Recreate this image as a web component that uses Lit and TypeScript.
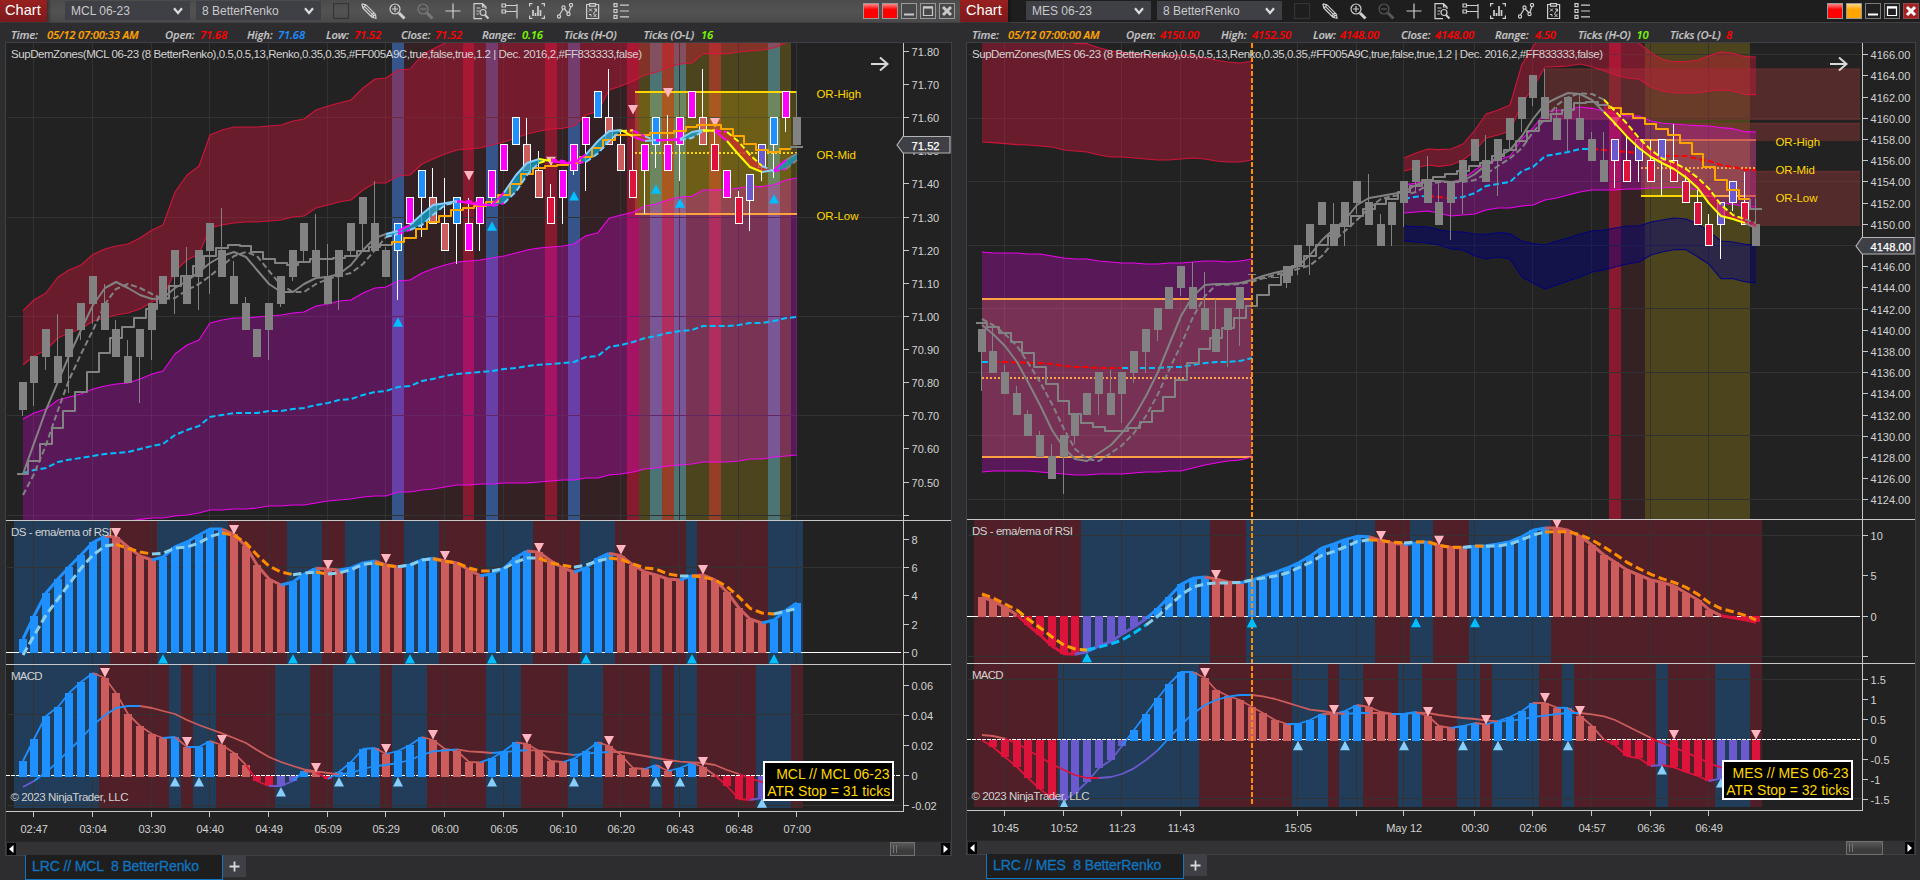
import { LitElement, html, svg, css, nothing } from "lit";
import { customElement, property } from "lit/decorators.js";

const N = 67;
const STEP = 11.739;

const COLORS: Record<string, string> = {
  b: "#1e90ff", r: "#cd5c5c", c: "#dc143c", s: "#6a5acd", m: "#ff00ff", g: "#828282",
  k: "#87ceeb", o: "#ff8c00", y: "#ffff00", l: "#87cefa", d: "#00bfff", R: "#ff0000", a: "#ffa500",
};

const nums = (s: string) => s.trim().split(/\s+/).map(Number);
// "b8 r4" -> eight times b, four times r
const runs = (s: string) =>
  s.trim().split(/\s+/).map((t) => t[0].repeat(Number(t.slice(1) || 1))).join("");

interface Band { from: number; hi: number[]; lo: number[]; fill: string; stroke: string; opacity: number; sw?: number }
interface Series { from: number; ys: number[]; colors: string; dash?: string; width: number }
interface Range { x1: number; x2: number; hi: number; mid: number; lo: number }
interface Tri { i: number; y: number; up?: boolean; color?: string }
interface Study { bars: number[]; colors: string; zero: number; sig: number[]; sigColors: string; tris: Tri[]; lineW: number; dash?: string }
interface ChartData {
  symbol: string; active: boolean; x0: number; left: number; width: number; height: number; axisX: number; stripeX: number;
  info: [number, string, string][]; title: string; lights: [string, string];
  gridX: number[]; times: string[]; gridY: number[]; priceTicks: [number, string][];
  stripes: [number, number, string][]; ranges: Range[]; bands: Band[]; zones: [number, number, number][];
  series: Series[]; stair: number[]; stairColors: string; tops: number[]; candles: string; candleColors: string;
  hma: number[]; sig: number[]; hmaColors: string; cloudFrom: number; cloudUp: string; cloudDown: string;
  tris: Tri[]; orLabels: [number, string][]; mark: [number, string]; sep: [number, number, number];
  ds: Study; macd: Study; studyGrid: number[]; dsTicks: [number, string][]; macdTicks: [number, string][];
  labelBox: [number, number, string, string]; session?: number; thumb: [number, number];
}

const PY = (v: number) => 60 + v / 3;
const SY = (v: number) => 515 + v / 3;

const down = (list: [number, number][]): Tri[] => list.map(([i, y]) => ({ i, y, color: "#ffb6c1" }));
const up = (list: [number, number][], color = "#00bfff"): Tri[] => list.map(([i, y]) => ({ i, y, up: true, color }));

const MCL: ChartData = {
  symbol: "MCL", active: false, x0: 23.02, left: 6, width: 945, height: 798, axisX: 903, stripeX: 14,
  info: [
    [11, "Time:", "w"], [47, "05/12 07:00:33 AM", "a"], [165, "Open:", "w"], [200, "71.68", "R"], [247, "High:", "w"],
    [278, "71.68", "b"], [326, "Low:", "w"], [354, "71.52", "R"], [401, "Close:", "w"], [435, "71.52", "R"],
    [482, "Range:", "w"], [522, "0.16", "n"], [564, "Ticks (H-O)", "w"], [643.5, "Ticks (O-L)", "w"], [701, "16", "n"],
  ],
  title: "SupDemZones(MCL 06-23 (8 BetterRenko),0.5,0.5,13,Renko,0.35,0.35,#FF005A9C,true,false,true,1.2 | Dec. 2016,2,#FF833333,false)",
  lights: ["#ff0000", "#ff0000"],
  gridX: [1, 6, 11, 16, 21, 26, 31, 36, 41, 46, 51, 56, 61, 66],
  times: "02:47 03:04 03:30 04:40 04:49 05:09 05:29 06:00 06:05 06:10 06:20 06:43 06:48 07:00".split(" "),
  gridY: [117, 217, 316, 415, 515],
  priceTicks: [[-25, "71.80"], [74, "71.70"], [173, "71.60"], [272, "71.50"], [371, "71.40"], [472, "71.30"], [571, "71.20"],
    [671, "71.10"], [769, "71.00"], [869, "70.90"], [968, "70.80"], [1066, "70.70"], [1166, "70.60"], [1267, "70.50"], [1366, ""]],
  stripes: [[32, 32, "#34548a"], [33, 52, "#342124"], [38, 38, "#881a30"], [40, 40, "#34548a"], [45, 45, "#881a30"],
    [47, 47, "#34548a"], [52, 52, "#881a30"], [53, 65, "#4c441c"], [54, 54, "#4c7474"], [55, 55, "#963e28"],
    [56, 56, "#4c7474"], [59, 59, "#963e28"], [64, 64, "#4c7474"]],
  ranges: [{ x1: 635, x2: 797, hi: 96, mid: 279, lo: 462 }],
  bands: [
    {
      from: 0, fill: "#dc143c", stroke: "#dc143c", opacity: 0.38,
      hi: nums("752 720 699 651 630 615 583 567 558 552 534 510 495 396 345 318 225 210 201 201 201 198 195 183 177 150 138 129 120 84 57 54 30 27 -15 -33 -51" + " -90".repeat(30)),
      lo: nums("915 888 870 834 819 807 783 774 765 759 747 726 714 633 600 582 504 495 489 486 486 483 480 471 468 444 435 426 420 390 369 369 348 345 312 297 282 270 267 264 255 246 234 222 214 207 205 198 165 154 90 78 63 45 37 22 12 9 -19 -19 -19 -24 -27 -30 -37 -51 -90"),
    },
    {
      from: 0, fill: "#ff00ff", stroke: "#ff00ff", opacity: 0.25,
      hi: nums("1077 1059 1047 1020 1011 1002 987 978 972 969 957 942 933 882 855 840 789 780 774 774 771 768 765 759 756 738 732 723 720 699 684 681 663 660 639 626 615 606 603 600 594 588 579 570 564 561 558 552 527 518 475 465 457 438 432 420 411 409 390 390 389 384 380 380 374 360 354"),
      lo: nums("1420 1415 1412 1406 1402 1398 1394 1390 1387 1384 1378 1374 1374 1368 1365 1359 1350 1350 1347 1347 1344 1338 1338 1335 1335 1329 1323 1320 1317 1311 1308 1308 1296 1296 1290 1287 1281 1275 1275 1272 1272 1269 1269 1269 1266 1263 1260 1260 1254 1254 1245 1242 1236 1227 1224 1218 1215 1212 1206 1206 1206 1203 1197 1197 1191 1188 1185"),
    },
  ],
  zones: [],
  series: [{
    from: 0, colors: runs("d67"), dash: "6 3", width: 2,
    ys: nums("1239 1230 1224 1206 1199 1194 1188 1182 1179 1176 1167 1158 1152 1125 1110 1098 1071 1065 1059 1059 1059 1053 1053 1047 1044 1035 1029 1020 1017 1005 996 993 981 978 963 957 948 942 939 936 933 927 924 918 914 912 909 906 891 888 861 855 846 834 828 819 813 810 798 798 798 795 789 789 783 774 771"),
  }],
  stair: nums("1242 1203 1152 1104 1053 996 936 879 834 801 774 747 714 678 648 618 588 564 555 558 576 597 609 615 606 597 597 594 588 573 561 555 546 534 507 486 468 450 444 438 426 405 372 342 324 318 315 309 291 264 240 225 225 225 219 219 213 201 195 195 207 228 252 270 276 267 261"),
  stairColors: runs("g32 a34 g1"),
  tops: [966, 888, 807, 729, 648, 570, 489, 411, 330, 252, 171, 93],
  candles: "0b1068 1b1038 2b930 1t762 2b999 3b840 4b792 3t672 2t780 1t840 2b1029 3b900 4 5b762 4t561 5b750 6b702 5t444 4t603 3t711 2 3b900 4b741 5b663 6b603 5t462 4t552 5b750 6b588 7b573 6t363 5t561 6b720 7 8b531 7t324 6t354 7b612 6t414 7b573 8b431 9 10 9t174 8t273 7t372 8b492 9b345 10b393 11 10t27 9t213 8t216 9b462 10b324 9t165 10b363 11 10t27 9t213 8 7t393 342-423b513 252-323b363 10b354 11b216 10t93",
  candleColors: runs("g32 b m b r r b m m m m b r r c m m m b r r c m b m m m r c m c s s b m g"),
  hma: nums("1242 1150 1050 965 888 810 735 684 666 684 705 717 714 684 663 636 609 588 576 591 630 672 696 696 672 654 651 642 615 570 534 522 513 495 462 435 430 423 429 435 434 398 345 309 297 303 309 309 283 243 214 210 230 243 240 240 237 216 210 213 243 285 321 336 330 300 280"),
  sig: nums("1305 1242 1155 1050 960 882 810 732 687 672 684 702 717 714 690 672 648 618 588 576 588 633 675 696 696 672 657 648 639 612 570 531 522 510 495 465 435 426 423 430 438 430 395 345 309 298 303 309 306 280 243 213 211 229 242 240 240 234 213 211 216 246 285 318 334 327 300"),
  hmaColors: runs("g32 l m l4 m4 l3 y m3 l3 y m l m2 l2 y m y3 l m g"),
  cloudFrom: 32, cloudUp: "rgba(20,160,200,.78)", cloudDown: "rgba(200,52,44,.8)",
  tris: [...down([[38, 333], [45, 290], [52, 135], [55, 84], [59, 174]]), ...up([[32, 772], [40, 484], [47, 393], [54, 373], [56, 415], [64, 402]])],
  orLabels: [[100, "OR-High"], [283, "OR-Mid"], [466, "OR-Low"]],
  mark: [253.5, "71.52"],
  sep: [520, 664, 811],
  ds: {
    zero: 412, lineW: 3, dash: "8.5 4",
    bars: nums("372 303 234 192 156 120 82 64 66 96 123 135 126 96 81 60 42 42 58 94 150 192 210 201 177 160 162 165 159 144 138 150 156 150 135 130 138 144 165 182 177 159 127 108 112 138 159 171 159 130 115 122 150 171 180 192 195 182 180 195 231 279 312 324 315 286 264"),
    colors: runs("b8 r4 b6 r5 b3 r2 b3 r2 b3 r4 b4 r4 b3 r6 b1 r6 b3"),
    sig: nums("420 362 300 252 207 160 120 93 88 100 111 117 115 99 96 84 65 54 60 84 120 153 171 179 174 171 177 174 164 148 144 151 155 150 135 131 139 144 159 168 168 160 141 129 129 144 151 157 150 138 129 133 147 159 162 177 183 183 186 195 215 246 280 294 297 288 280"),
    sigColors: runs("k9 o3 k6 o6 k2 o1 k4 o2 k3 o5 k4 o3 k3 o6 k1 o7 k2"),
    tris: [...down([[8, 39], [18, 30], [26, 135], [31, 117], [36, 108], [44, 84], [51, 90], [58, 150]]), ...up([[12, 417], [23, 417], [28, 417], [33, 417], [40, 417], [48, 417], [57, 417], [64, 417]])],
  },
  macd: {
    zero: 782, lineW: 1.8,
    bars: nums("738 672 603 576 534 501 474 489 534 597 633 657 669 666 696 696 678 690 714 750 798 813 813 798 768 772 792 771 741 702 699 717 708 690 666 675 702 708 741 742 730 708 682 687 708 738 741 731 708 682 693 720 759 762 750 768 759 744 756 781 813 852 855 849 835 820 800"),
    colors: runs("b7 r6 b1 r1 b2 r3 c2 s2 b1 r1 c1 b4 r1 b3 r5 b3 r4 b3 r4 b1 r1 b2 r2 c3 s3 r1"),
    sig: nums("816 798 772 740 705 672 630 601 579 573 573 579 588 597 615 630 642 655 669 684 705 726 741 753 763 769 774 778 774 762 753 750 744 735 720 709 706 703 709 711 714 711 708 705 707 711 716 720 716 713 711 711 717 723 729 735 740 742 744 750 765 777 790 801 805 805 805"),
    sigColors: runs("s2 b9 r17 b10 r3 b3 r4 b3 r11 c5"),
    tris: [...down([[7, 459], [14, 666], [17, 660], [25, 744], [31, 687], [35, 645], [43, 657], [50, 663], [55, 738], [58, 726]]),
      ...up([[13, 786], [15, 786], [22, 816], [27, 786], [32, 786], [40, 786], [47, 786], [54, 786], [56, 786], [63, 850]], "#87cefa")],
  },
  studyGrid: [567, 714, 805],
  dsTicks: [[72, "8"], [157, "6"], [242, "4"], [328, "2"], [412, "0"]],
  macdTicks: [[510, "0.06"], [600, "0.04"], [690, "0.02"], [781, "0"], [872, "-0.02"]],
  labelBox: [763, 761, "MCL // MCL 06-23", "ATR Stop = 31 ticks"],
  thumb: [889, 25],
};

const MES: ChartData = {
  symbol: "MES", active: true, x0: 22.025, left: 7, width: 948, height: 797, axisX: 902, stripeX: 14,
  info: [
    [12, "Time:", "w"], [48, "05/12 07:00:00 AM", "a"], [166, "Open:", "w"], [200, "4150.00", "R"], [261, "High:", "w"],
    [292, "4152.50", "R"], [353, "Low:", "w"], [380, "4148.00", "R"], [441, "Close:", "w"], [475, "4148.00", "R"],
    [535, "Range:", "w"], [575, "4.50", "R"], [618, "Ticks (H-O)", "w"], [676.5, "10", "n"], [710, "Ticks (O-L)", "w"], [766, "8", "R"],
  ],
  title: "SupDemZones(MES 06-23 (8 BetterRenko),0.5,0.5,13,Renko,0.35,0.35,#FF005A9C,true,false,true,1.2 | Dec. 2016,2,#FF833333,false)",
  lights: ["#ff0000", "#ffa500"],
  gridX: [2, 7, 12, 17, 27, 32, 36, 42, 47, 52, 57, 62],
  times: ["10:45", "10:52", "11:23", "11:43", "15:05", "", "May 12", "00:30", "02:06", "04:57", "06:36", "06:49"],
  gridY: [54, 118, 181, 245, 308, 372, 435, 499],
  // the 4148 row carries the last-price marker instead of a label
  priceTicks: Array.from({ length: 22 }, (_, i) => [-15.7 + i * 63.6, i === 9 ? "" : `${4166 - 2 * i}.00`] as [number, string]),
  stripes: [[54, 54, "#881a30"], [55, 56, "#342124"], [57, 65, "#4c441c"]],
  ranges: [{ x1: 22, x2: 292, hi: 717, mid: 954, lo: 1191 }, { x1: 681, x2: 796, hi: 240, mid: 324, lo: 408 }],
  bands: [
    {
      from: 0, fill: "#dc143c", stroke: "#dc143c", opacity: 0.38,
      hi: nums("-60 -60 -60 -60 -60 -60 -60 -60 -50 -49 -37 -27 -23 -19 -16 -13 -13 -14 -14 -6 0 6 9 3"),
      lo: nums("246 248 251 254 255 258 261 270 273 276 285 291 291 294 297 300 300 297 294 297 303 306 306 300"),
    },
    {
      from: 0, fill: "#ff00ff", stroke: "#ff00ff", opacity: 0.25,
      hi: nums("576 579 579 579 582 582 588 594 597 597 603 606 609 609 612 612 609 609 606 603 603 606 603 597"),
      lo: nums("1236 1233 1233 1233 1233 1236 1239 1242 1245 1245 1242 1242 1242 1239 1236 1236 1233 1233 1224 1215 1209 1203 1200 1191"),
    },
    {
      from: 36, fill: "#dc143c", stroke: "#dc143c", opacity: 0.38,
      hi: nums("294 279 267 269 267 252 210 162 150 135 12 -40 -90 -90 -90 -90 -90 -90 -90 -90 -50 -22 -2 5 5 0 -13 -25 -20 -10 -9"),
      lo: nums("333 324 315 319 315 300 273 234 225 213 130 84 21 20 18 12 20 32 45 54 57 81 93 99 99 99 93 90 93 103 104"),
    },
    {
      from: 36, fill: "#ff00ff", stroke: "#ff00ff", opacity: 0.25,
      hi: nums("374 370 361 363 366 357 330 309 300 288 237 204 156 150 150 141 145 153 162 168 168 183 189 192 195 197 198 203 206 215 216"),
      lo: nums("459 456 453 460 468 465 462 450 444 444 438 435 420 414 405 396 390 390 390 387 387 384 384 381 384 390 405 429 433 440 441"),
    },
    {
      from: 36, fill: "#000080", stroke: "#000080", opacity: 0.42,
      hi: nums("498 500 501 509 515 516 522 523 518 521 543 551 555 543 534 522 513 510 504 498 498 486 480 474 477 492 515 543 546 553 555"),
      lo: nums("542 546 549 555 567 570 588 597 591 597 651 669 687 675 663 651 636 630 621 612 606 585 576 569 569 591 613 656 656 665 669"),
    },
  ],
  zones: [[584.5, 27, 180], [713, 190, 243], [785, 334, 498]],
  series: [
    {
      from: 0, colors: runs("d2 R11 d11"), dash: "6 3", width: 2,
      ys: nums("906 906 906 907 908 909 912 918 921 921 924 924 924 924 924 924 921 921 915 909 906 906 903 894"),
    },
    {
      from: 36, colors: runs("d3 R2 d12 R14"), dash: "6 3", width: 2,
      ys: nums("417 410 408 411 415 411 399 378 372 366 333 321 288 282 276 267 267 270 273 276 279 285 287 288 288 297 303 315 321 329 330"),
    },
  ],
  stair: nums("789 801 819 846 879 921 972 1023 1062 1089 1101 1113 1113 1104 1086 1053 1011 960 909 867 834 804 774 738 705 675 645 618 588 555 528 498 468 447 432 417 396 378 360 351 342 333 318 309 288 270 243 213 183 162 150 129 126 135 144 162 174 192 207 225 249 282 321 360 390 417 447"),
  stairColors: runs("g54 a12 g1"),
  tops: [46, 111, 174, 237, 300, 363, 427, 492, 555, 618, 681, 744, 807, 873, 936, 999, 1062, 1125, 1188],
  candles: "12b993 13t804 14t915 15t978 16t1050 17t1113 18t1152 17b1302 16b1152 15 14b1065 15t930 14b1089 13b969 12b939 11b843 10 9b708 10t606 11t636 12t717 11b921 10b858 642-645 655-658 651-654 618-669b684 8b645 7b645 6 7t429 6b558 5b462 6t342 7t462 6b558 5b501 4b396 357-429t288 6t363 5b540 4b462 3 4t225 3b408 2b267 1b216 0b138 1t27 2t141 1b273 2t105 3t216 4t216 3b384 4t228 3b366 4t240 3b408 4t192 5t342 6t390 7t462 6b597 5b453 6t336 7t414",
  candleColors: runs("g54 s c s c s c c c c s s c g"),
  hma: nums("795 822 858 906 966 1035 1110 1164 1197 1203 1179 1155 1119 1071 1008 936 855 768 708 675 672 672 669 660 648 638 630 618 585 540 507 480 435 414 408 402 396 375 363 363 366 363 342 315 291 270 228 177 132 114 99 102 120 156 190 230 264 291 309 327 352 385 430 468 477 489 505"),
  sig: nums("777 795 822 858 908 966 1032 1107 1167 1197 1203 1179 1156 1119 1068 1002 930 855 771 708 675 674 672 665 655 645 635 627 616 588 543 513 480 444 417 408 405 396 375 366 366 366 360 342 318 295 264 216 177 135 112 100 102 119 153 191 234 270 295 308 327 354 386 435 465 478 489"),
  hmaColors: runs("g54 y12 g1"),
  cloudFrom: 54, cloudUp: "rgba(20,160,200,.78)", cloudDown: "rgba(215,20,80,.72)",
  tris: down([[54, 171]]),
  orLabels: [[244, "OR-High"], [328, "OR-Mid"], [412, "OR-Low"]],
  mark: [556.5, "4148.00"],
  sep: [519, 663, 810],
  ds: {
    zero: 304, lineW: 3, dash: "8.5 4",
    bars: nums("246 258 277 300 330 360 393 416 418 410 393 380 357 336 311 280 246 208 190 186 192 201 204 195 184 172 159 144 124 99 87 74 64 65 76 84 89 84 81 92 97 99 94 92 87 80 65 46 39 39 46 64 90 120 141 165 180 195 202 213 234 255 284 302 308 314 322"),
    colors: runs("r4 c5 s6 b5 r3 b11 r3 b2 r3 b7 r15 c3"),
    sig: nums("237 249 267 285 312 338 366 390 402 405 396 387 375 354 330 303 273 240 216 207 204 204 202 195 189 183 174 159 143 121 109 96 80 74 77 81 84 81 80 91 97 97 93 94 93 87 74 60 51 50 50 59 75 96 117 142 161 178 191 202 217 238 263 281 290 301 315"),
    sigColors: runs("o4 a6 d5 k19 o3 k1 o4 k1 o1 k5 o18"),
    tris: [...down([[20, 165], [34, 48], [39, 62], [49, 11]]), ...up([[9, 413], [23, 308], [37, 308], [42, 308]])],
  },
  macd: {
    zero: 674, lineW: 1.8,
    bars: nums("676 696 726 756 789 822 850 855 834 801 759 735 693 645 597 549 507 471 471 489 525 543 555 576 594 615 627 627 615 597 597 588 570 576 591 597 597 591 603 633 639 633 624 628 618 606 588 564 564 578 579 602 633 674 690 723 730 753 750 757 771 783 798 790 775 760 740"),
    colors: runs("c7 s6 b6 r8 b3 r1 b2 r3 b2 r3 b2 r1 b4 r2 b1 r3 c4 s1 c4 s3 c1"),
    sig: nums("660 663 671 685 705 726 747 765 780 789 789 786 777 760 735 705 669 630 596 570 555 545 540 540 544 552 563 573 584 588 594 597 594 594 594 597 597 593 594 600 605 609 612 616 619 617 613 606 602 597 594 594 598 604 615 633 651 669 684 697 712 728 745 757 765 770 775"),
    sigColors: runs("r3 c8 s5 b8 r8 b2 r2 b2 r7 b7 r6 c9"),
    tris: [...down([[19, 459], [30, 570], [33, 546], [38, 576], [43, 600], [48, 534], [51, 573], [59, 645], [66, 645]]),
      ...up([[7, 853], [27, 677], [31, 677], [36, 677], [41, 677], [44, 677], [50, 677], [58, 750], [63, 789]], "#87cefa")],
  },
  studyGrid: [535, 656, 679, 798],
  dsTicks: [[62, "10"], [182, "5"], [304, "0"], [424, ""]],
  macdTicks: [[494, "1.5"], [554, "1"], [614, "0.5"], [674, "0"], [734, "-0.5"], [792, "-1"], [852, "-1.5"]],
  labelBox: [762, 760, "MES // MES 06-23", "ATR Stop = 32 ticks"],
  session: 23,
  thumb: [885, 37],
};

@customElement("trend-chart")
class TrendChart extends LitElement {
  @property({ attribute: false }) data!: ChartData;

  static styles = css`
    :host { display: block; }
    svg { display: block; font-family: "Liberation Sans", Arial, sans-serif; }
    .t { font-size: 11px; fill: #d2d2d2; }
    .cap { font-size: 11.5px; fill: #d2d2d2; }
    .or { font-size: 11.5px; fill: #ffd700; }
    .box { font-size: 14px; fill: #ffd700; }
    .mark { font-size: 11.2px; fill: #fff; stroke: #fff; stroke-width: 0.25px; }
    .crisp { shape-rendering: crispEdges; }
    .line { fill: none; stroke-linejoin: round; }
  `;

  x(i: number) { return Math.floor(this.data.x0 + STEP * i); }

  pts(ys: number[], from: number, Y: (v: number) => number) {
    return ys.map((v, k) => `${this.x(from + k)},${Y(v).toFixed(2)}`);
  }

  // one polyline for each run of equal colour
  multi(ys: number[], from: number, colors: string, Y: (v: number) => number, width: number, dash?: string) {
    const p = this.pts(ys, from, Y);
    const out = [];
    let s = 1;
    for (let k = 2; k <= ys.length; k++) {
      if (k === ys.length || colors[k] !== colors[s]) {
        out.push(svg`<polyline class="line" points=${p.slice(s - 1, k).join(" ")} stroke=${COLORS[colors[s]]}
          stroke-width=${width} stroke-dasharray=${dash ?? nothing}/>`);
        s = k;
      }
    }
    return out;
  }

  tri(t: Tri, Y: (v: number) => number) {
    const x = this.x(t.i), y = Y(t.y);
    return t.up
      ? svg`<polygon points="${x},${y} ${x + 5},${y + 9.5} ${x - 5},${y + 9.5}" fill=${t.color}/>`
      : svg`<polygon points="${x - 5},${y} ${x + 5},${y} ${x},${y + 9.5}" fill=${t.color}/>`;
  }

  band(b: Band) {
    const hi = this.pts(b.hi, b.from, PY), lo = this.pts(b.lo, b.from, PY);
    return svg`<polygon points="${hi.join(" ")} ${[...lo].reverse().join(" ")}" fill=${b.fill} fill-opacity=${b.opacity}/>
      <polyline class="line" points=${hi.join(" ")} stroke=${b.stroke} stroke-width="1.1" stroke-opacity=".9"/>
      <polyline class="line" points=${lo.join(" ")} stroke=${b.stroke} stroke-width="1.1" stroke-opacity=".9"/>`;
  }

  candle(spec: string, i: number) {
    const d = this.data, c = d.candleColors[i];
    const m = spec.match(/^(\d+)(?:-(\d+))?(?:t(\d+))?(?:b(\d+))?$/)!;
    const custom = m[2] !== undefined;
    const top = custom ? +m[1] : d.tops[+m[1]];
    const next = d.tops.filter((t) => t > top).sort((a, b) => a - b)[0];
    const bottom = custom ? +m[2] : (next ?? top + (d.symbol === "MCL" ? 81 : 66)) + 3;
    const X = this.x(i), y1 = Math.round(PY(top)), y2 = Math.round(PY(bottom));
    const w1 = m[3] ? Math.round(PY(+m[3])) : y1, w2 = m[4] ? Math.round(PY(+m[4])) : y2;
    const gray = c === "g";
    return svg`<rect x=${X - 1} y=${w1} width="1" height=${w2 - w1} fill=${gray ? COLORS.g : "#fff"}/>
      <rect x=${X - 4} y=${y1} width="8" height=${y2 - y1} fill=${gray ? COLORS.g : "#fff"}/>
      ${gray ? nothing : svg`<rect x=${X - 3} y=${y1 + 1} width="6" height=${y2 - y1 - 2} fill=${COLORS[c]}/>`}`;
  }

  stairs() {
    const d = this.data, out = [];
    for (let s = 0; s < N;) {
      let e = s;
      while (e + 1 < N && d.stairColors[e + 1] === d.stairColors[s]) e++;
      let path = s ? `M${this.x(s) - 6} ${PY(d.stair[s - 1])}V${PY(d.stair[s])}` : `M${this.x(0) - 6} ${PY(d.stair[0])}`;
      for (let i = s; i <= e; i++) path += `V${PY(d.stair[i]).toFixed(1)}H${i < N - 1 ? this.x(i + 1) - 6 : this.x(i) + 6}`;
      out.push(svg`<path class="line" d=${path} stroke=${COLORS[d.stairColors[s]]} stroke-width="2"/>`);
      s = e + 1;
    }
    return out;
  }

  cloud() {
    const d = this.data, out = [];
    for (let i = d.cloudFrom; i < N; i++) {
      const a = this.x(i - 1), b = this.x(i);
      const up = d.hma[i] + d.hma[i - 1] < d.sig[i] + d.sig[i - 1];
      out.push(svg`<polygon points="${a},${PY(d.hma[i - 1])} ${b},${PY(d.hma[i])} ${b},${PY(d.sig[i])} ${a},${PY(d.sig[i - 1])}"
        fill=${up ? d.cloudUp : d.cloudDown}/>`);
    }
    return out;
  }

  studyBack(s: Study, y1: number, y2: number) {
    const rise = (i: number) => "bs".includes(s.colors[i]);
    const out = [];
    let a = 0;
    for (let i = 1; i <= N; i++) {
      if (i === N || rise(i) !== rise(a)) {
        const x1 = a ? this.x(a) - 6 : this.data.stripeX;
        const x2 = i === N ? this.x(N - 1) + 6 : this.x(i) - 6;
        out.push(svg`<rect x=${x1} y=${y1} width=${x2 - x1} height=${y2 - y1} fill=${rise(a) ? "#223d5a" : "#501f27"}/>`);
        a = i;
      }
    }
    return out;
  }

  study(s: Study) {
    const z = Math.round(SY(s.zero));
    return svg`<g class="crisp">${s.bars.map((v, i) => {
      const y = Math.round(SY(v)), t = Math.min(y, z), h = Math.abs(y - z) + (y < z ? 1 : 0);
      return svg`<rect x=${this.x(i) - 4} y=${t} width="8" height=${h} fill=${COLORS[s.colors[i]]}/>`;
    })}</g>
    ${this.multi(s.bars, 0, s.colors, SY, s.lineW)}
    ${this.multi(s.sig, 0, s.sigColors, SY, s.lineW, s.dash)}
    ${s.tris.map((t) => this.tri(t, SY))}`;
  }

  ticks(list: [number, string][], Y: (v: number) => number) {
    const ax = this.data.axisX;
    return list.map(([v, label]) => {
      const y = Math.floor(Y(v));
      return svg`<rect class="crisp" x=${ax} y=${y} width="6" height="1" fill="#c8c8c8"/>
        <text class="t" x=${ax + 8.6} y=${y + 4.6}>${label}</text>`;
    });
  }

  render() {
    const d = this.data, [s1, s2, s3] = d.sep, ax = d.axisX, R = d.left + d.width;
    const [bx, by, l1, l2] = d.labelBox;
    const my = PY(d.mark[0]);
    return html`<svg width=${d.width} height=${d.height} viewBox="${d.left} 43 ${d.width} ${d.height}">
      <defs>
        <clipPath id="price"><rect x=${d.left} y="43" width=${ax - d.left} height=${s1 - 43}/></clipPath>
        <clipPath id="osc"><rect x=${d.left} y=${s1} width=${ax - d.left} height=${s3 - 3 - s1}/></clipPath>
      </defs>
      <rect x=${d.left} y="43" width=${d.width} height=${d.height} fill="#222222"/>
      <g class="crisp">
        ${d.stripes.map(([a, b, c]) => svg`<rect x=${this.x(a) - 6} y="43" width=${this.x(b + 1) - this.x(a)} height=${s1 - 43} fill=${c}/>`)}
        ${this.studyBack(d.ds, s1, s2)}
        ${this.studyBack(d.macd, s2, s3 - 3)}
        ${d.gridX.map((i) => svg`<rect x=${this.x(i) - 1} y="43" width="1" height=${s3 - 46} fill="#323232"/>`)}
        ${[...d.gridY, ...d.studyGrid].map((y) => svg`<rect x=${d.left + 1} y=${y} width=${ax - d.left - 2} height="1" fill="#323232"/>`)}
      </g>
      <g clip-path="url(#price)">
        ${d.ranges.map((r) => svg`<g class="crisp">
          <rect x=${r.x1} y=${PY(r.hi)} width=${r.x2 - r.x1} height=${(r.lo - r.hi) / 3} fill="#ffd700" fill-opacity=".18"/>
          <rect x=${r.x1} y=${PY(r.hi) - 1} width=${r.x2 - r.x1} height="2" fill="#ffd700"/>
          <rect x=${r.x1} y=${PY(r.lo) - 1} width=${r.x2 - r.x1} height="2" fill="#ffd700"/>
          <line x1=${r.x1} x2=${r.x2} y1=${PY(r.mid)} y2=${PY(r.mid)} stroke="#ffd700" stroke-width="2" stroke-dasharray="2 2"/></g>`)}
        ${d.zones.map(([x, a, b]) => svg`<rect x=${x} y=${PY(a)} width=${900 - x} height=${(b - a) / 3} fill="#833333" fill-opacity=".5"/>
          <line x1=${x} x2="900" y1=${PY(a)} y2=${PY(a)} stroke="#833333" stroke-opacity=".7"/>`)}
        ${d.bands.map((b) => this.band(b))}
        ${d.series.map((s) => this.multi(s.ys, s.from, s.colors, PY, s.width, s.dash))}
        <g class="crisp">${d.candles.split(" ").map((c, i) => this.candle(c, i))}</g>
        ${d.tris.map((t) => this.tri(t, PY))}
        ${this.cloud()}
        ${this.stairs()}
        ${this.multi(d.hma, 0, d.hmaColors, PY, 2)}
        ${this.multi(d.sig, 0, d.hmaColors, PY, 2, "6 3")}
      </g>
      <g class="crisp">
        <rect x=${d.left} y=${Math.floor(SY(d.ds.zero))} width=${ax - 2 - d.left} height="1" fill="#ffffff"/>
        <line x1=${d.left} x2=${ax - 2} y1=${Math.floor(SY(d.macd.zero - 1)) + 0.5} y2=${Math.floor(SY(d.macd.zero - 1)) + 0.5} stroke="#fff" stroke-width="1" stroke-dasharray="4 1"/>
      </g>
      <g clip-path="url(#osc)">${this.study(d.ds)}${this.study(d.macd)}</g>
      ${d.session !== undefined ? svg`<line class="crisp" x1=${this.x(d.session)} x2=${this.x(d.session)} y1="43" y2=${s3 - 5}
          stroke="#ff8c00" stroke-width="2" stroke-dasharray="5 2"/>
        ${d.ds.tris.filter((t) => t.i === d.session).map((t) => this.tri(t, SY))}` : nothing}
      <g class="crisp" fill="#c8c8c8">
        <rect x=${d.left} y=${s1} width=${d.width} height="1"/>
        <rect x=${d.left} y=${s2} width=${d.width} height="1"/>
        <rect x=${d.left} y=${s3} width=${ax - d.left + 1} height="1"/>
        <rect x=${ax} y="43" width="1" height=${s3 - 43}/>
        ${d.gridX.map((i) => svg`<rect x=${this.x(i) - 1} y=${s3 + 1} width="1" height="5"/>`)}
      </g>
      ${this.ticks(d.priceTicks, PY)}${this.ticks(d.dsTicks, SY)}${this.ticks(d.macdTicks, SY)}
      ${d.gridX.map((i, k) => svg`<text class="t" text-anchor="middle" x=${this.x(i) + 0.2} y=${s3 + 22}>${d.times[k]}</text>`)}
      <text class="cap" x=${d.left + 5} y="58" textLength="631">${d.title}</text>
      <text class="cap" x=${d.left + 5} y=${s1 + 15.5} textLength="101">DS - ema/ema of RSI</text>
      <text class="cap" x=${d.left + 5} y=${s2 + 15.5} textLength="31.5">MACD</text>
      <text class="cap" x=${d.left + 4.5} y=${s3 - 10} textLength="118">© 2023 NinjaTrader, LLC</text>
      ${d.orLabels.map(([v, s]) => svg`<text class="or" x=${d.left + d.width - (d.symbol === "MCL" ? 134.6 : 139.6)} y=${PY(v) + 4.2}>${s}</text>`)}
      <path d="M${ax - 32} 64H${ax - 16}M${ax - 23} 57.5L${ax - 15.5} 64L${ax - 23} 70.5" fill="none" stroke="#d8d8d8" stroke-width="2"/>
      <path d="M${ax - 6} ${my + 0.5}L${ax} ${my - 8}H${R - 1}V${my + 8.5}H${ax}Z" fill="#3f3f46" stroke="#b4b4b4" stroke-width="1.2"/>
      <text class="mark" x=${ax + 8.6} y=${my + 5}>${d.mark[1]}</text>
      <rect x=${bx + 1} y=${by + 1} width="129" height="38" fill="#000" stroke="#fff" stroke-width="2"/>
      <text class="box" text-anchor="end" x=${bx + 126.5} y=${by + 17.6}>${l1}</text>
      <text class="box" text-anchor="end" x=${bx + 127.3} y=${by + 34.6}>${l2}</text>
    </svg>`;
  }
}

const icons = [
  svg`<rect x=".5" y=".5" width="15" height="15" stroke="#343436"/>`,
  svg`<path d="M.8 .8l1 4.200M.8 .8l4.200 1M1.800 5L5 1.800M1.800 5l9.500 9.500M5 1.800l9.500 9.500M3.400 3.400l9.500 9.500M9.800 13l3.200-3.200M11.300 14.500l3.200-3.200M11.300 14.500l3.700 .8-.500-4"/>`,
  svg`<circle cx="6" cy="6" r="5"/><path d="M3 6h6M6 3v6"/><path d="M10 10l5.500 5.500" stroke-width="3"/>`,
  svg`<g opacity=".32"><circle cx="6" cy="6" r="5"/><path d="M3 6h6"/><path d="M10 10l5.500 5.500" stroke-width="3"/></g>`,
  svg`<path d="M8 .5v15M.5 8h15"/>`,
  svg`<path d="M13 6V4L9.500 .6H1v15h8M9.500 .6V4H13M3.500 5h4M3.500 8h3M3.500 11h2"/><circle cx="10" cy="9.500" r="3"/><path d="M12 12l3.500 3.500" stroke-width="2"/>`,
  svg`<path d="M1 1h3.500v3H1zM1 7h3.500v3H1zM4.500 2.500H16v13M4.500 8.500H16M16 1v2"/>`,
  svg`<path d="M3.500 .6H.6v3M12.500 .6h2.900v3M3.500 15.400H.6v-3M12.500 15.400h2.900v-3"/><path d="M4 7v6M6.500 10v3M9 3v10M11.500 7v6" stroke-width="1.700"/>`,
  svg`<path d="M2.500 12L6 6M7.500 6L11 10M12 9l2-5.500"/><circle cx="2" cy="13.500" r="1.600"/><circle cx="6.500" cy="4.500" r="1.600"/><circle cx="11.500" cy="11" r="1.600"/><circle cx="14" cy="2" r="1.600"/>`,
  svg`<path d="M4 1.500H1.600v14h12v-14H11M4.500 .6h6v2.500h-6z"/><path d="M4 5.500l3 3M7 5.500l-3 3M8.500 11l3-5M9 6h2.500v2.500M4 11.500h2v2M8.500 11l3 3M11.500 11l-3 3" stroke-width="1"/>`,
  svg`<path d="M1 .7h3v3H1zM1 6.500h3v3H1zM1 12.400h3v3H1zM7 2.200h9M7 8h9M7 13.900h9"/>`,
];

@customElement("chart-window")
class ChartWindow extends LitElement {
  @property({ attribute: false }) data!: ChartData;

  static styles = css`
    :host { display: block; width: 960px; height: 880px; background: #2d2d30; font-family: "Liberation Sans", Arial, sans-serif; overflow: hidden; }
    .bar { display: flex; align-items: flex-start; height: 22px; background: linear-gradient(#4b4b4b, #535353 50%, #4a4a4a); border-bottom: 1px solid #414145; box-sizing: content-box; }
    .active .bar { background: #1e1e1e; }
    .tag { width: 47px; height: 22px; box-sizing: border-box; padding: 2px 0 0 5px; color: #fff; font-size: 14.6px; line-height: 17px; background: linear-gradient(#98201f, #7c191c); box-shadow: 2px 0 3px #0006; }
    .active .tag { width: 48px; padding-left: 6px; }
    .drop { width: 125px; height: 19px; box-sizing: border-box; margin: 1px 6px 0 0; padding: 0 7px 0 6px; display: flex; align-items: center; justify-content: space-between; background: #3f3f46; color: #c9c9c9; font-size: 12px; }
    .tag + .drop { margin-left: 18px; }
    .tools { display: grid; grid-template-columns: repeat(11, 28px); margin: 3px 0 0 6px; }
    .tools svg { display: block; width: 17px; height: 17px; fill: none; stroke: #cfcfcf; stroke-width: 1.200; }
    .caps { display: flex; gap: 3px; margin: 3px 5px 0 auto; }
    .active .caps { margin-right: 1px; }
    .btn { width: 16px; height: 16px; box-sizing: border-box; border: 1px solid #9a9a9a; display: grid; place-items: center; background: #48484a; }
    .active .btn { border-color: #7a7a7a; background: #202022; }
    .btn svg { display: block; width: 14px; height: 14px; }
    .active .btn.close { background: #a52222; border-color: #8f4a4a; }
    .light { width: 16px; height: 16px; box-sizing: border-box; border: 1px solid #9a9a9a; }
    .info { display: grid; height: 19px; white-space: nowrap; font: italic 600 11.2px/24px "Open Sans", "Noto Sans", sans-serif; letter-spacing: -0.15px; -webkit-text-stroke: 0.15px currentColor; }
    .info .w { color: #c3c3c3; }
    .info .a { color: #ffa500; }
    .info .R { color: #ff0000; }
    .info .b { color: #1e90ff; }
    .info .n { color: #7cfc00; }
    .frame { margin-left: 5px; width: fit-content; border: 1px solid #3f3f46; border-bottom-width: 1px; }
    .active .frame { margin-left: 6px; }
    .scroll { display: flex; justify-content: space-between; align-items: center; height: 13px; background: #333335; border-top: 1px solid #262626; padding: 0 1px; }
    .arrow { width: 9px; height: 12px; background: #000; display: grid; place-items: center; }
    .arrow svg { display: block; width: 5px; height: 8px; fill: #fff; }
    .track { flex: 1; }
    .thumb { height: 12px; border: 1px solid #707070; background: linear-gradient(#5a5a5a, #3c3c3c 60%); display: flex; gap: 2px; padding-left: 2px; align-items: center; box-sizing: content-box; }
    .thumb i { width: 1px; height: 8px; background: #777; }
    .tabs { display: flex; align-items: flex-start; margin: -1px 0 0 25px; }
    .active .tabs { margin-left: 26px; }
    .tab { width: 198px; height: 25px; box-sizing: border-box; border: 1px solid #0e76c4; border-top: 0; background: #1e1e1e; color: #1173bf; font-size: 14px; line-height: 23px; padding-left: 6px; white-space: pre; letter-spacing: -0.12px; -webkit-text-stroke: 0.3px #1173bf; }
    .add { width: 23px; height: 22px; background: #3f3f46; display: grid; place-items: center; }
    .add svg { display: block; width: 11px; height: 11px; stroke: #d8d8d8; stroke-width: 1.800; }
  `;

  chevron() {
    return html`<svg width="10" height="8" viewBox="0 0 10 8"><path d="M1 1.200L5 6L9 1.200" fill="none" stroke="#dcdcdc" stroke-width="2.200"/></svg>`;
  }

  render() {
    const d = this.data;
    const stroke = d.active ? "#ffffff" : "#c8c8c8";
    const cols = d.info.map(([x], i) => `${(i + 1 < d.info.length ? d.info[i + 1][0] : 900) - x}px`).join(" ");
    return html`<div class=${d.active ? "active" : ""}>
      <div class="bar">
        <div class="tag">Chart</div>
        <div class="drop"><span>${d.symbol} 06-23</span>${this.chevron()}</div>
        <div class="drop"><span>8 BetterRenko</span>${this.chevron()}</div>
        <div class="tools">${icons.map((ic) => html`<svg viewBox="0 0 17 17">${ic}</svg>`)}</div>
        <div class="caps">
          ${d.lights.map((c) => html`<div class="light" style="background:linear-gradient(#fff8,#fff0 40%) ${c}"></div>`)}
          <div class="btn"><svg viewBox="0 0 14 14"><path d="M2 10.500h10" stroke=${stroke} stroke-width="2"/></svg></div>
          <div class="btn"><svg viewBox="0 0 14 14"><path d="M2.500 3h9v8.500h-9z" fill="none" stroke=${stroke} stroke-width="1.200"/><path d="M2 3.500h10" stroke=${stroke} stroke-width="2.200"/></svg></div>
          <div class="btn close"><svg viewBox="0 0 14 14"><path d="M3 3l8 8M11 3l-8 8" stroke=${stroke} stroke-width="3"/></svg></div>
        </div>
      </div>
      <div class="info" style="grid-template-columns:${cols};padding-left:${d.info[0][0]}px">
        ${d.info.map(([, t, c]) => html`<span class=${c}>${t}</span>`)}
      </div>
      <div class="frame">
        <trend-chart .data=${d}></trend-chart>
        <div class="scroll">
          <div class="arrow"><svg viewBox="0 0 5 8"><path d="M4.500 0v8L0 4z"/></svg></div>
          <div class="track"></div>
          <div class="thumb" style="width:${d.thumb[1] - 4}px;margin-right:${d.left + d.width - 11 - d.thumb[0] - d.thumb[1]}px"><i></i><i></i></div>
          <div class="arrow"><svg viewBox="0 0 5 8"><path d="M.5 0v8L5 4z"/></svg></div>
        </div>
      </div>
      <div class="tabs">
        <div class="tab">LRC // ${d.symbol}  8 BetterRenko</div>
        <div class="add"><svg viewBox="0 0 11 11"><path d="M5.500 .5v10M.5 5.500h10"/></svg></div>
      </div>
    </div>`;
  }
}

@customElement("app-root")
class AppRoot extends LitElement {
  static styles = css`
    :host { display: grid; grid-template-columns: 960px 960px; width: 1920px; height: 880px; background: #2d2d30; overflow: hidden; }
  `;
  render() {
    return html`<chart-window .data=${MCL}></chart-window><chart-window .data=${MES}></chart-window>`;
  }
}
